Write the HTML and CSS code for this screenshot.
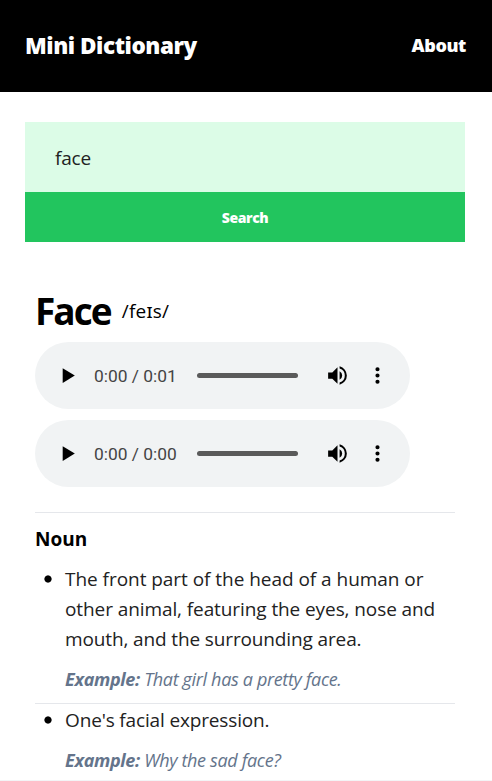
FILE: index.html
```html
<!DOCTYPE html>
<html lang="en">
<head>
<meta charset="utf-8">
<title>Mini Dictionary</title>
<link rel="stylesheet" href="styles.css">
</head>
<body>
<svg class="sprite" aria-hidden="true">
  <symbol id="play" viewBox="0 0 24 24"><path d="M7.4 5v14.2L19 12.1z"/></symbol>
  <symbol id="volume" viewBox="0 0 24 24"><path d="M3 9v6h4l5 5V4L7 9H3zm13.5 3A4.5 4.5 0 0 0 14 7.97v8.05A4.47 4.47 0 0 0 16.5 12zM14 3.23v2.06a7 7 0 0 1 0 13.42v2.06a9 9 0 0 0 0-17.54z"/></symbol>
  <symbol id="more" viewBox="0 0 24 24"><path d="M12 8a2 2 0 1 0 0-4 2 2 0 0 0 0 4zm0 2a2 2 0 1 0 0 4 2 2 0 0 0 0-4zm0 6a2 2 0 1 0 0 4 2 2 0 0 0 0-4z"/></symbol>
</svg>
<div class="page">
  <header class="topbar">
    <a class="brand">Mini Dictionary</a>
    <a class="about">About</a>
  </header>
  <form class="search">
    <div class="search-input">face</div>
    <button class="search-button" type="button">Search</button>
  </form>
  <main class="entry">
    <div class="heading">
      <h1 class="word">Face</h1>
      <span class="phonetic">/feɪs/</span>
    </div>
    <div class="player">
      <svg class="icon play"><use href="#play"/></svg>
      <span class="time">0:00 / 0:01</span>
      <span class="track"></span>
      <svg class="icon volume"><use href="#volume"/></svg>
      <svg class="icon more"><use href="#more"/></svg>
    </div>
    <div class="player">
      <svg class="icon play"><use href="#play"/></svg>
      <span class="time">0:00 / 0:00</span>
      <span class="track"></span>
      <svg class="icon volume"><use href="#volume"/></svg>
      <svg class="icon more"><use href="#more"/></svg>
    </div>
    <section class="meaning">
      <h2 class="part">Noun</h2>
      <ul class="senses">
        <li class="sense">
          <p class="definition"><span class="l1">The front part of the head of a human or</span><br><span class="l2">other animal, featuring the eyes, nose and</span><br><span class="l3">mouth, and the surrounding area.</span></p>
          <p class="example"><b>Example:</b> <span class="e1">That girl has a pretty face.</span></p>
        </li>
        <li class="sense">
          <p class="definition"><span class="l4">One's facial expression.</span></p>
          <p class="example"><b>Example:</b> <span class="e2">Why the sad face?</span></p>
        </li>
      </ul>
    </section>
  </main>
</div>
</body>
</html>
```
FILE: styles.css
```css
* { box-sizing: border-box; margin: 0; padding: 0; }
body { background: #fff; color: #000; font-family: "Open Sans", "Noto Sans", sans-serif; }
.sprite { display: none; }
.page { height: 781px; overflow: hidden; border-bottom: 1px solid #f3f4f6; }
.topbar { height: 92px; padding: 0 26px 2px 25px; display: flex; align-items: center; justify-content: space-between; background: #000; color: #fff; font-weight: 800; }
.brand { font-size: 22.5px; letter-spacing: -0.45px; white-space: nowrap; }
.about { font-size: 18px; letter-spacing: -0.4px; }
.search { width: 440px; margin: 30px 0 0 25px; }
.search-input { height: 70px; padding: 0 30px; line-height: 72px; background: #dcfce7; color: #222; font-size: 19px; letter-spacing: -0.2px; }
.search-button { display: block; width: 100%; height: 50px; padding-top: 1px; border: 0; background: #22c55e; color: #fff; font: 800 14px/50px "Open Sans", sans-serif; letter-spacing: -0.4px; }
.entry { width: 420px; margin: 41px 0 0 35px; }
.heading { height: 59px; padding-bottom: 3px; display: flex; align-items: center; gap: 11px; }
.word { font-size: 37px; font-weight: 700; line-height: 50px; letter-spacing: -1.95px; }
.phonetic { font-size: 19px; line-height: 50px; letter-spacing: 0.2px; }
.player { width: 375px; height: 67px; margin-bottom: 11px; padding-left: 20px; display: flex; align-items: center; border-radius: 34px; background: #f1f3f4; }
.icon { width: 25px; height: 25px; flex: none; fill: #000; }
.time { width: 83px; margin-left: 14px; color: #444; font-family: Roboto, sans-serif; font-size: 17.4px; white-space: nowrap; }
.track { width: 101px; height: 5px; margin-left: 20px; border-radius: 3px; background: #5a5a5a; }
.volume { margin-left: 27px; }
.more { margin-left: 15px; }
.meaning { margin-top: 25px; border-top: 1px solid #e5e7eb; }
.part { height: 51px; line-height: 53px; font-size: 19px; font-weight: 700; letter-spacing: 0; }
.senses { list-style: none; }
.sense { height: 140px; padding-left: 30px; background: radial-gradient(circle at 13px 15px, #000 3.2px, transparent 4px) no-repeat; border-bottom: 1px solid #e5e7eb; white-space: nowrap; }
.sense + .sense { height: 80px; padding-top: 1px; background-position: 0 1px; }
.definition { line-height: 30px; font-size: 19px; color: #222; }
.l1 { letter-spacing: -0.04px; }
.l2 { letter-spacing: -0.09px; }
.l3 { letter-spacing: -0.13px; }
.l4 { letter-spacing: -0.15px; }
.example { line-height: 51px; height: 49px; font-size: 18px; font-style: italic; color: #64748b; letter-spacing: -0.34px; }
```
